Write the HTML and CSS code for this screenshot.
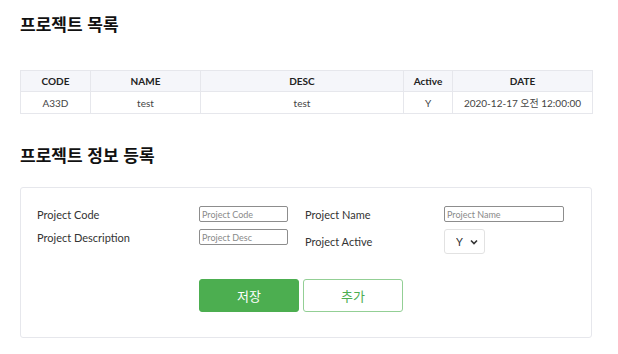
FILE: index.html
```html
<!DOCTYPE html>
<html lang="ko">
<head>
  <meta charset="UTF-8" />
  <meta name="viewport" content="width=device-width, initial-scale=1.0"/>
  <title>프로젝트</title>
  <link rel="stylesheet" href="styles.css">
</head>
<body>

  <h2 class="title first">프로젝트 목록</h2>

  <table class="list">
    <thead>
      <tr>
        <th class="c-code">CODE</th>
        <th class="c-name">NAME</th>
        <th class="c-desc">DESC</th>
        <th class="c-active">Active</th>
        <th>DATE</th>
      </tr>
    </thead>
    <tbody>
      <tr>
        <td>A33D</td>
        <td>test</td>
        <td>test</td>
        <td>Y</td>
        <td>2020-12-17 오전 12:00:00</td>
      </tr>
    </tbody>
  </table>

  <h2 class="title">프로젝트 정보 등록</h2>

  <div class="card">
    <div class="fields">
      <div class="col left">
        <div class="row">
          <label>Project Code</label>
          <input class="txt short" type="text" placeholder="Project Code">
        </div>
        <div class="row">
          <label>Project Description</label>
          <input class="txt short" type="text" placeholder="Project Desc">
        </div>
      </div>
      <div class="col right">
        <div class="row">
          <label>Project Name</label>
          <input class="txt long" type="text" placeholder="Project Name">
        </div>
        <div class="row">
          <label>Project Active</label>
          <span class="select-wrap">
            <select class="sel">
              <option>Y</option>
              <option>N</option>
            </select>
            <svg class="chev" width="8" height="6" viewBox="0 0 8 6"><path d="M1 1.5 L4 4.5 L7 1.5" fill="none" stroke="#333" stroke-width="1.6"/></svg>
          </span>
        </div>
      </div>
    </div>
    <div class="buttons">
      <button class="btn save">저장</button>
      <button class="btn add">추가</button>
    </div>
  </div>

</body>
</html>
```

FILE: styles.css
```css
* {
  margin: 0;
  padding: 0;
  box-sizing: border-box;
}

body {
  font-family: Lato, "Noto Sans CJK KR", sans-serif;
  color: #333;
  background: #fff;
  padding: 0 25px 0 20px;
}

.title {
  font-family: "Noto Sans CJK KR", sans-serif;
  font-size: 17px;
  font-weight: 700;
  line-height: 24px;
  color: #111;
  margin-top: 29px;
}

.title.first {
  margin-top: 12px;
}

.list {
  width: 573px;
  margin-top: 34px;
  border-collapse: collapse;
  font-size: 10px;
}

.list th,
.list td {
  border: 1px solid #e6e7ec;
  text-align: center;
  height: 21px;
  padding: 0 4px;
}

.list th {
  background: #f5f6fa;
  color: #222;
  font-weight: 700;
}

.list td {
  height: 22px;
  color: #444;
}

.c-code { width: 70px; }
.c-name { width: 110px; }
.c-desc { width: 203px; }
.c-active { width: 49px; }

.card {
  margin-top: 20px;
  width: 572px;
  border: 1px solid #e6e7ec;
  border-radius: 3px;
  padding: 18px 16px 25px;
}

.fields {
  display: flex;
}

.col {
  display: flex;
  flex-direction: column;
  gap: 7px;
}

.col.left {
  width: 268px;
}

.row {
  display: flex;
  align-items: center;
}

.row label {
  font-size: 11px;
  color: #333;
}

.left label { width: 162px; }
.right label { width: 139px; }

.txt {
  height: 16px;
  border: 1px solid #8d8d8d;
  border-radius: 2px;
  font-family: Lato, sans-serif;
  font-size: 9px;
  padding: 0 2px;
  color: #333;
}

.txt::placeholder {
  color: #8a8a8a;
}

.short { width: 89px; }
.long { width: 120px; }

.select-wrap {
  position: relative;
  display: inline-block;
}

.sel {
  appearance: none;
  -webkit-appearance: none;
  width: 41px;
  height: 25px;
  border: 1px solid #e2e2e2;
  border-radius: 3px;
  background: #fff;
  font-family: Lato, sans-serif;
  font-size: 11px;
  color: #333;
  padding-left: 11px;
}

.chev {
  position: absolute;
  right: 7px;
  top: 10px;
  pointer-events: none;
}

.buttons {
  display: flex;
  gap: 4px;
  margin-top: 25px;
  padding-left: 162px;
}

.btn {
  width: 100px;
  height: 33px;
  border-radius: 3px;
  font-family: "Noto Sans CJK KR", sans-serif;
  font-size: 13px;
  cursor: pointer;
}

.save {
  background: #4cae50;
  border: 1px solid #4cae50;
  color: #fff;
}

.add {
  background: #fff;
  border: 1px solid #93cf95;
  color: #4cae50;
}
```
